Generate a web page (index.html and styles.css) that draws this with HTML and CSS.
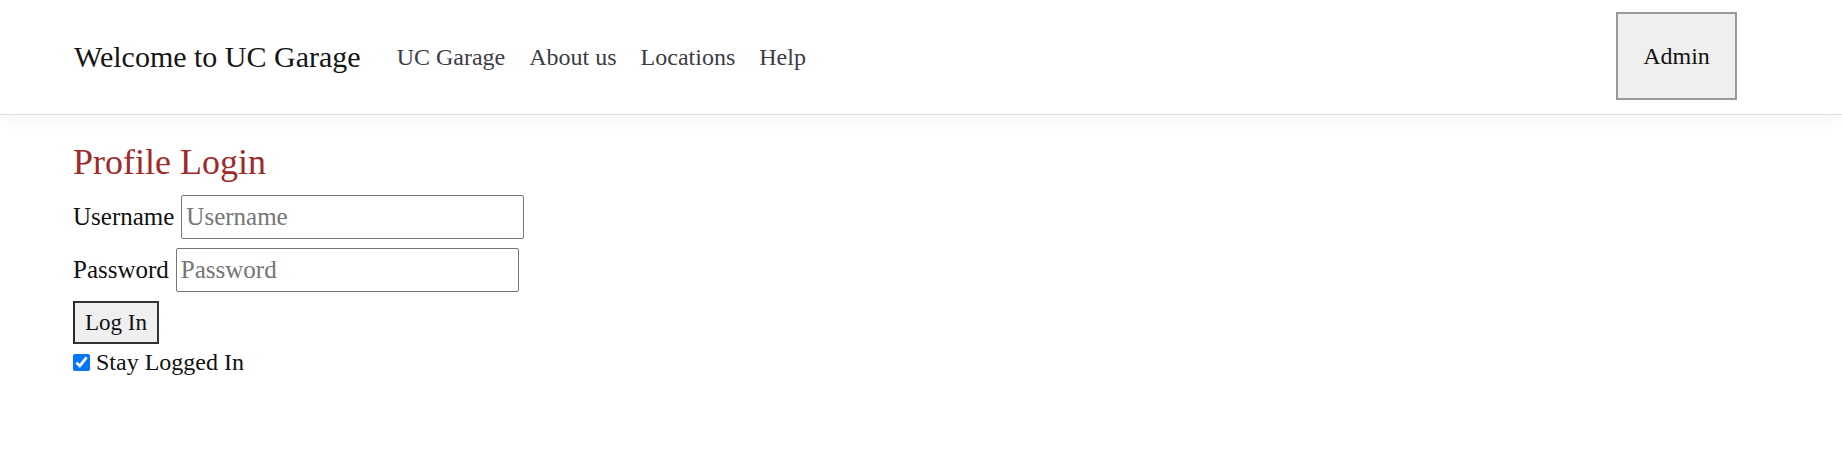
FILE: index.html
```html
<!DOCTYPE html>
<html lang="en">
<head>
<meta charset="utf-8">
<title>UC Garage - Profile Login</title>
<link rel="stylesheet" href="styles.css">
</head>
<body>
<header class="topbar">
  <div class="brand">Welcome to UC Garage</div>
  <nav class="nav">
    <a class="nav-link" href="#">UC Garage</a>
    <a class="nav-link" href="#">About us</a>
    <a class="nav-link" href="#">Locations</a>
    <a class="nav-link" href="#">Help</a>
  </nav>
  <button class="admin-btn" type="button">Admin</button>
</header>
<main class="content">
  <h1 class="title">Profile Login</h1>
  <form class="login-form">
    <div class="row row-user">
      <label class="label" for="username">Username</label>
      <input class="field" id="username" type="text" placeholder="Username">
    </div>
    <div class="row row-pass">
      <label class="label" for="password">Password</label>
      <input class="field" id="password" type="password" placeholder="Password">
    </div>
    <div class="row row-btn">
      <button class="login-btn" type="button">Log In</button>
    </div>
    <div class="row row-check">
      <input class="check" id="stay" type="checkbox" checked>
      <label class="check-label" for="stay">Stay Logged In</label>
    </div>
  </form>
</main>
</body>
</html>
```
FILE: styles.css
```css
html, body {
  margin: 0;
  padding: 0;
  background: #ffffff;
  font-family: "Liberation Serif", "Times New Roman", serif;
  color: #111111;
}

.topbar {
  height: 114px;
  display: flex;
  align-items: center;
  padding: 0 105px 0 74px;
  background: #ffffff;
  border-bottom: 1px solid #dedede;
  box-shadow: 0 5px 14px rgba(0, 0, 0, 0.035);
  position: relative;
}

.brand {
  font-size: 30px;
  color: #161616;
  white-space: nowrap;
}

.nav {
  display: flex;
  gap: 24px;
  margin-left: 36px;
}

.nav-link {
  font-size: 24px;
  color: #3c3c46;
  text-decoration: none;
  white-space: nowrap;
}

.admin-btn {
  margin-left: auto;
  width: 121px;
  height: 88px;
  box-sizing: border-box;
  border: 2px solid #9a9a9a;
  background: #efefef;
  font-family: "Liberation Serif", "Times New Roman", serif;
  font-size: 24px;
  color: #111111;
  padding: 0;
  margin-top: -2px;
}

.content {
  padding: 0 0 0 73px;
}

.title {
  margin: 26px 0 0 0;
  font-size: 36px;
  font-weight: normal;
  color: #9e2a2b;
  line-height: normal;
}

.login-form {
  margin-top: 12px;
  display: flex;
  flex-direction: column;
  align-items: flex-start;
}

.row {
  display: flex;
  align-items: center;
  gap: 7px;
}

.row-pass {
  margin-top: 9px;
}

.row-btn {
  margin-top: 9px;
}

.row-check {
  margin-top: 5px;
  gap: 6px;
}

.label {
  font-size: 25px;
  color: #111111;
}

.field {
  width: 343px;
  height: 44px;
  box-sizing: border-box;
  border: 1px solid #767676;
  border-radius: 2px;
  padding: 0 4px;
  font-family: "Liberation Serif", "Times New Roman", serif;
  font-size: 25px;
  color: #111111;
  background: #ffffff;
}

.field::placeholder {
  color: #757575;
}

.login-btn {
  width: 86px;
  height: 43px;
  box-sizing: border-box;
  border: 2px solid #333333;
  border-left-color: #2a2a2a;
  background: #efefef;
  font-family: "Liberation Serif", "Times New Roman", serif;
  font-size: 23px;
  color: #111111;
  padding: 0;
}

.check {
  width: 17px;
  height: 17px;
  margin: 0;
  accent-color: #0075ff;
}

.check-label {
  font-size: 24px;
  color: #111111;
}
```
